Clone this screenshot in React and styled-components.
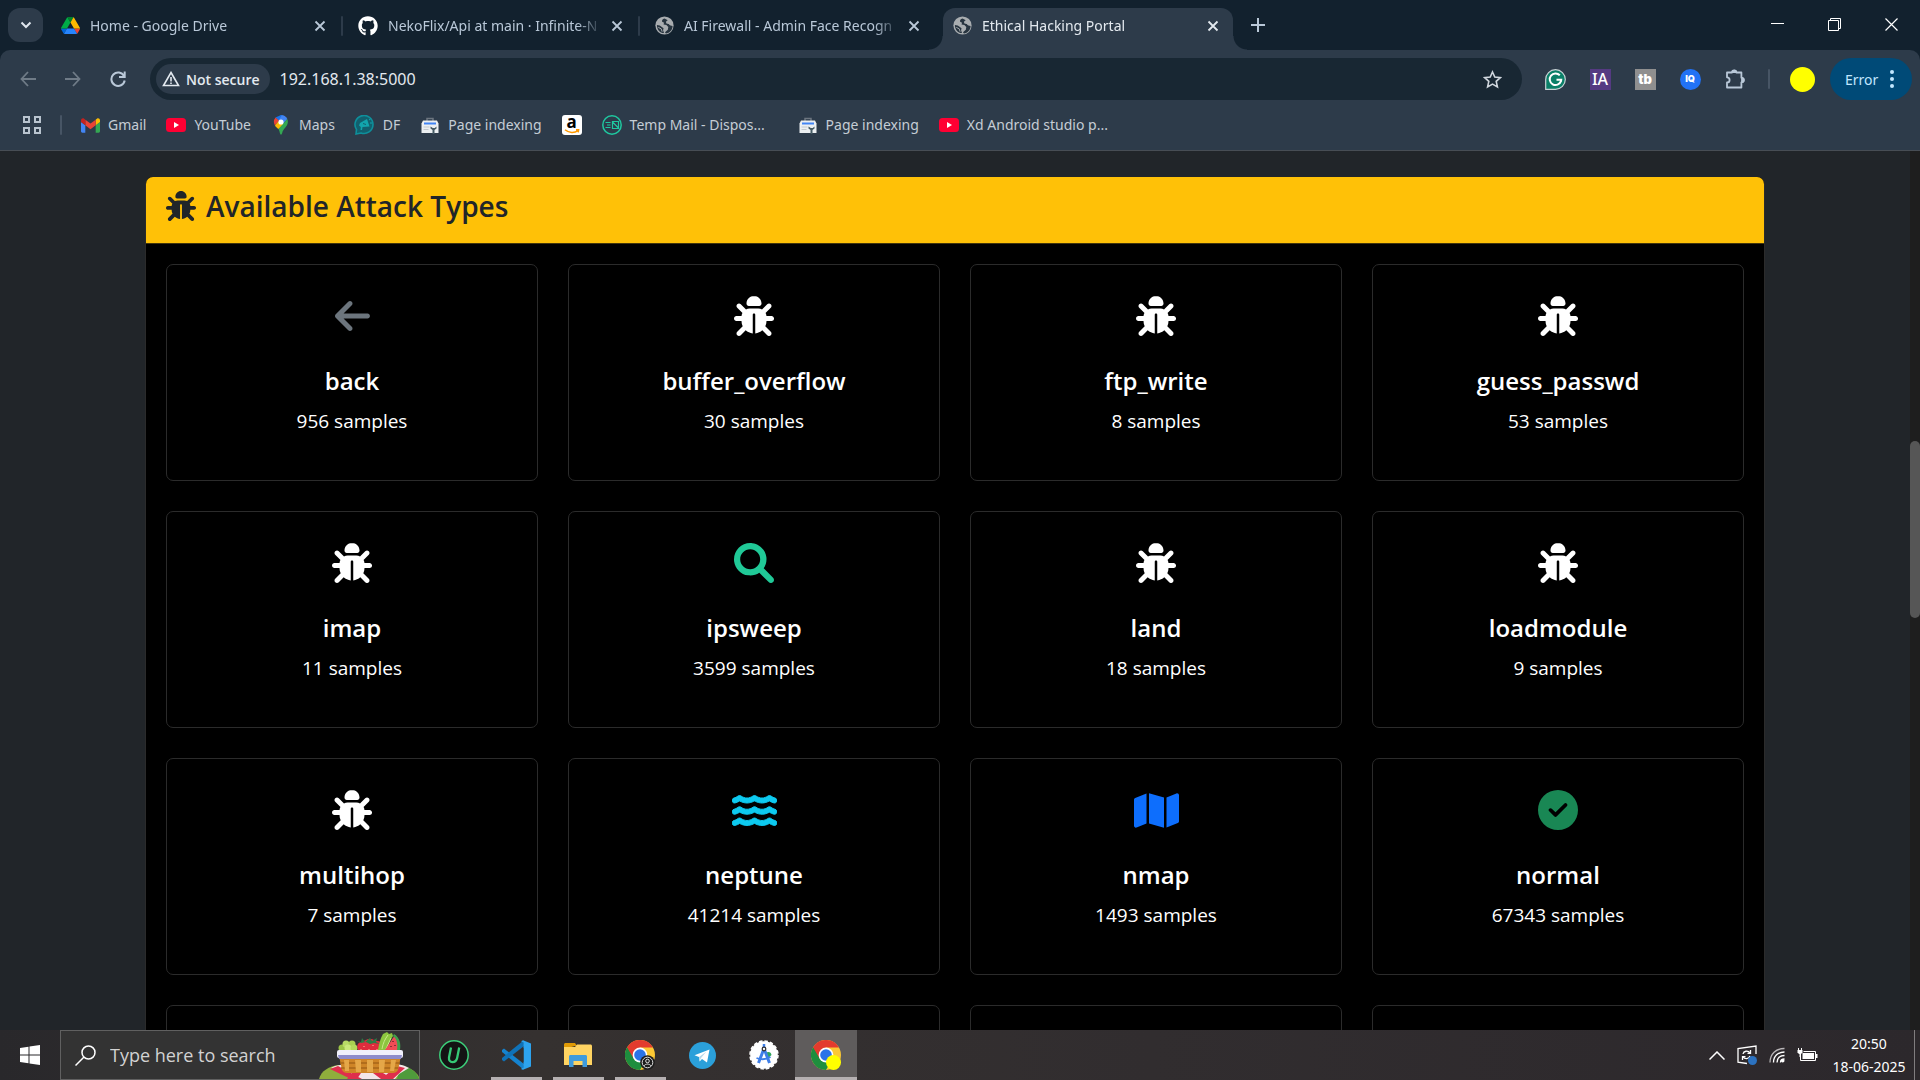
import React from "react";
import styled, { createGlobalStyle, css } from "styled-components";
import { FaBug, FaCircleCheck, FaGithub, FaMap, FaWater } from "react-icons/fa6";

const GlobalStyle = createGlobalStyle`
  *, *::before, *::after { box-sizing: border-box; }
  body {
    margin: 0;
    background: #212529;
    font-family: "Segoe UI", "Noto Sans", "Open Sans", sans-serif;
    font-size: 14px;
    color: #fff;
  }
  button, input { font: inherit; color: inherit; }
  button { border: 0; padding: 0; background: none; }
  h1, h2, p { margin: 0; }
  a { color: inherit; text-decoration: none; }
  svg { display: block; flex: none; }
`;

const Screen = styled.div`
  display: flex;
  flex-direction: column;
  height: 100vh;
  overflow: hidden;
`;

const center = css`
  display: flex;
  align-items: center;
  justify-content: center;
`;

/* ---------- tab strip ---------- */

const TabStrip = styled.header`
  flex: none;
  display: flex;
  height: 50px;
  padding: 8px 0 0 8px;
  background: #12212e;
`;

const TabSearchButton = styled.button`
  ${center}
  flex: none;
  width: 35px;
  height: 34px;
  margin-right: 3px;
  border-radius: 12px;
  background: #2d3b4a;
`;

const Tab = styled.div`
  position: relative;
  display: flex;
  align-items: center;
  width: ${(p) => (p.$active ? 290 : 297)}px;
  height: 42px;
  padding: 0 10px 7px ${(p) => (p.$active ? 10 : 15)}px;
  color: ${(p) => (p.$active ? "#e3e9ef" : "#b9c8d8")};
  ${(p) =>
    p.$active &&
    css`
      margin-left: 6px;
      border-radius: 12px 12px 0 0;
      background: #2d3b4a;
      &::before,
      &::after {
        content: "";
        position: absolute;
        bottom: 0;
        width: 14px;
        height: 14px;
      }
      &::before {
        right: 100%;
        background: radial-gradient(circle at 0 0, transparent 13px, #2d3b4a 14px);
      }
      &::after {
        left: 100%;
        background: radial-gradient(circle at 100% 0, transparent 13px, #2d3b4a 14px);
      }
    `}
`;

const TabTitle = styled.span`
  flex: 1;
  margin: 0 4px 0 10px;
  white-space: nowrap;
  line-height: 20px;
  mask-image: linear-gradient(to right, #000 88%, transparent);
`;

const TabClose = styled.button`
  ${center}
  width: 20px;
  height: 20px;
  margin-right: ${(p) => (p.$active ? 0 : 11)}px;
`;

const TabDivider = styled.span`
  width: 2px;
  height: 20px;
  margin-right: -10px;
  border-radius: 1px;
  background: #2d3b4a;
  visibility: ${(p) => (p.$hidden ? "hidden" : "visible")};
`;

const NewTab = styled.button`
  ${center}
  width: 34px;
  height: 34px;
  margin-left: 8px;
  color: #b9c8d8;
`;

const WindowButtons = styled.div`
  display: flex;
  margin: -8px 0 0 auto;
`;

const WindowButton = styled.button`
  ${center}
  width: 57px;
  height: 48px;
`;

/* ---------- toolbar ---------- */

const Chrome = styled.div`
  flex: none;
  background: #12212e;
`;

const ToolbarPanel = styled.div`
  border-radius: 10px 10px 0 0;
  border-bottom: 1px solid #474d54;
  background: #2d3b4a;
`;

const Toolbar = styled.div`
  display: flex;
  align-items: center;
  height: 58px;
  padding: 0 8px 0 5px;
`;

const NavButton = styled.button`
  ${center}
  width: 45px;
  height: 42px;
  color: ${(p) => (p.$off ? "#6f7b87" : "#b9c8d8")};
`;

const Omnibox = styled.div`
  flex: 1;
  display: flex;
  align-items: center;
  height: 42px;
  margin-left: 10px;
  padding: 0 20px 0 6px;
  border-radius: 21px;
  background: #182733;
`;

const SecurityChip = styled.button`
  display: flex;
  align-items: center;
  gap: 6px;
  height: 30px;
  padding: 0 10px 0 6px;
  border-radius: 15px;
  background: #2d3b4a;
  color: #e3e9ef;
  font-family: "Segoe UI", "Open Sans", sans-serif;
  font-weight: 600;
`;

const Address = styled.input`
  flex: 1;
  min-width: 0;
  height: 30px;
  margin-left: 10px;
  padding: 0;
  border: 0;
  outline: 0;
  background: none;
  font-size: 16px;
  color: #e3e9ef;
`;

const Extensions = styled.div`
  display: flex;
  gap: 23px;
  padding: 0 22px;
`;

const ExtensionButton = styled.button`
  ${center}
  width: 22px;
  height: 22px;
`;

const ToolbarDivider = styled.span`
  width: 2px;
  height: 20px;
  margin: ${(p) => (p.$tight ? "0 18px" : "0 20px 0 0")};
  border-radius: 1px;
  background: #475565;
`;

const Avatar = styled.button`
  width: 25px;
  height: 25px;
  margin-right: 15px;
  border-radius: 50%;
  background: #ffff00;
`;

const ErrorPill = styled.button`
  display: flex;
  align-items: center;
  justify-content: space-between;
  width: 82px;
  height: 42px;
  padding: 0 18px 0 15px;
  border-radius: 21px;
  background: #004a77;
  color: #c2e7ff;
`;

const BookmarkBar = styled.nav`
  display: flex;
  align-items: center;
  height: 42px;
  padding: 0 22px 8px;
  color: #c5cdd5;
`;

const Bookmark = styled.a`
  display: flex;
  align-items: center;
  gap: 8px;
  margin-right: 20px;
  line-height: 20px;
  white-space: nowrap;
`;

const BookmarkIcon = styled.span`
  ${center}
  width: 20px;
  height: 20px;
`;

const BookmarkLabel = styled.span`
  min-width: ${(p) => (p.$long ? 148 : 0)}px;
`;

/* ---------- page ---------- */

const Viewport = styled.div`
  flex: 1;
  min-height: 0;
  display: flex;
  background: #212529;
`;

const PageBody = styled.main`
  flex: 1;
  min-width: 0;
  overflow: hidden;
  padding: 26px 15px 0;
  font-family: "Segoe UI", "Open Sans", "Noto Sans", sans-serif;
`;

const Scrollbar = styled.div`
  width: 10px;
  padding-top: 290px;
  background: #1e1e1e;
`;

const ScrollThumb = styled.div`
  height: 177px;
  border-radius: 5px;
  background: #565656;
`;

const Panel = styled.section`
  max-width: 1620px;
  margin: 0 auto;
  border: 1px solid #2b2b2b;
  border-top: 0;
  border-radius: 7px;
  background: #000;
`;

const PanelHeader = styled.header`
  display: flex;
  align-items: flex-start;
  gap: 10px;
  height: 67px;
  padding: 14px 20px 0;
  border-bottom: 1px solid #42350b;
  border-radius: 7px 7px 0 0;
  background: #ffc107;
  color: #212529;
`;

const PanelTitle = styled.h1`
  font-size: 28px;
  line-height: 30px;
  font-weight: 600;
`;

const CardGrid = styled.div`
  display: grid;
  grid-template-columns: repeat(4, 1fr);
  gap: 30px;
  padding: 20px;
`;

const Card = styled.article`
  display: flex;
  flex-direction: column;
  align-items: center;
  height: 217px;
  padding-top: 31px;
  border: 1px solid #2b2b2b;
  border-radius: 7px;
`;

const CardIcon = styled.div`
  ${center}
  height: 40px;
  margin-bottom: 30px;
  font-size: ${(p) => (p.$wide ? 45 : 40)}px;
  color: ${(p) => p.$color};
`;

const CardTitle = styled.h2`
  margin-bottom: 10px;
  font-size: 24px;
  line-height: 30px;
  font-weight: 600;
`;

const CardText = styled.p`
  font-size: 19px;
  line-height: 30px;
`;

/* ---------- taskbar ---------- */

const Taskbar = styled.footer`
  flex: none;
  display: flex;
  height: 50px;
  background: linear-gradient(90deg, #29282b, #353130 28%, #312d2f 60%, #2c282c);
`;

const StartButton = styled.button`
  ${center}
  width: 60px;
`;

const SearchBox = styled.label`
  display: flex;
  align-items: center;
  width: 360px;
  margin-right: 3px;
  padding-left: 14px;
  border: 1px solid #606060;
  background: #333;
`;

const SearchInput = styled.input`
  flex: 1;
  min-width: 0;
  margin-left: 14px;
  padding: 0;
  border: 0;
  outline: 0;
  background: none;
  font-family: "Segoe UI", "Open Sans", sans-serif;
  font-size: 18px;
  &::placeholder {
    color: #d2d2d2;
    opacity: 1;
  }
`;

const TaskButton = styled.button`
  ${center}
  width: 62px;
  border: solid transparent;
  border-width: 3px 0;
  ${(p) =>
    p.$running &&
    css`
      background: linear-gradient(#b5b0b1, #b5b0b1) center bottom / 51px 3px no-repeat border-box;
    `}
  ${(p) =>
    p.$active &&
    css`
      background: #5f5c5c;
      border-bottom-color: #b5b0b1;
    `}
`;

const Tray = styled.div`
  display: flex;
  align-items: center;
  gap: 12px;
  margin-left: auto;
`;

const Clock = styled.time`
  display: flex;
  flex-direction: column;
  width: 78px;
  margin-right: 6px;
  text-align: center;
  line-height: 23px;
`;

const ShowDesktop = styled.button`
  align-self: stretch;
  width: 6px;
  margin-left: -12px;
  border-left: 1px solid #807d7f;
`;

/* ---------- drawings ---------- */

const Svg = ({ w = 20, h = w, box, children, ...rest }) => (
  <svg width={w} height={h} viewBox={box || `0 0 ${w} ${h}`} fill="none" aria-hidden="true" {...rest}>
    {children}
  </svg>
);

const ArrowLeftIcon = () => (
  <Svg w={35} h={40} box="0 0 448 512">
    <path
      fill="currentColor"
      d="M447.1 256C447.1 273.7 432.8 288 415.1 288H109.3l105.4 105.4c12.5 12.5 12.5 32.75 0 45.25C208.4 444.9 200.2 448 192 448s-16.38-3.125-22.62-9.375l-160-160c-12.5-12.5-12.5-32.75 0-45.25l160-160c12.5-12.5 32.75-12.5 45.25 0s12.5 32.75 0 45.25L109.3 224H416C433.7 224 447.1 238.3 447.1 256z"
    />
  </Svg>
);

const MagnifierIcon = () => (
  <Svg w={40} box="0 0 512 512">
    <path
      fill="currentColor"
      d="M500.3 443.7l-119.7-119.7c27.22-40.41 40.65-90.9 33.46-144.7C401.8 87.79 326.8 13.32 235.2 1.723C99.01-15.51-15.51 99.01 1.724 235.2c11.6 91.64 86.08 166.7 177.6 178.9c53.8 7.189 104.3-6.236 144.7-33.46l119.7 119.7c15.62 15.62 40.95 15.62 56.57 0C515.9 484.7 515.9 459.3 500.3 443.7zM79.1 208c0-70.58 57.42-128 128-128s128 57.42 128 128c0 70.58-57.42 128-128 128S79.1 278.6 79.1 208z"
    />
  </Svg>
);

const WavesIcon = () => <FaWater stroke="currentColor" strokeWidth="12" />;

const Cross = () => (
  <Svg w={12} stroke="currentColor" strokeWidth="1.8">
    <path d="M1.5 1.5l9 9M10.5 1.5l-9 9" />
  </Svg>
);

const DriveIcon = () => (
  <Svg w={19} h={17} box="0 0 87.3 78">
    <path d="M6.6 66.85l3.85 6.65c.8 1.4 1.95 2.5 3.3 3.3L27.5 53H0c0 1.55.4 3.1 1.2 4.5z" fill="#0066da" />
    <path d="M43.65 25L29.9 1.2c-1.35.8-2.5 1.9-3.3 3.3L1.2 48.5A9 9 0 0 0 0 53h27.5z" fill="#00ac47" />
    <path d="M73.55 76.8c1.35-.8 2.5-1.9 3.3-3.3l1.6-2.75 7.65-13.25c.8-1.4 1.2-2.95 1.2-4.5H59.8l5.85 11.5z" fill="#ea4335" />
    <path d="M43.65 25L57.4 1.2C56.05.4 54.5 0 52.9 0H34.4c-1.6 0-3.15.45-4.5 1.2z" fill="#00832d" />
    <path d="M59.8 53H27.5L13.75 76.8c1.35.8 2.9 1.2 4.5 1.2h50.8c1.6 0 3.15-.45 4.5-1.2z" fill="#2684fc" />
    <path d="M73.4 26.5L60.7 4.5c-.8-1.4-1.95-2.5-3.3-3.3L43.65 25 59.8 53h27.45c0-1.55-.4-3.1-1.2-4.5z" fill="#ffba00" />
  </Svg>
);

const GlobeIcon = () => (
  <Svg w={19} box="0 0 20 20">
    <circle cx="10" cy="10" r="9.6" fill="#a9adb0" />
    <path
      d="M10 2.500c-2 .5-3 2-2.500 3.500L9.500 7 9 9l3 .5 2 2-.5 3-3 2.500 1 1.500c4-.5 7-4 7-8-1.500 0-3-.5-4-2l-2.500-.5-.5-2 2-1.500z"
      fill="#27343f"
    />
    <path d="M12.500 5h3l2 4-2.500-.5-2.500-1.500z" fill="#a9adb0" />
    <path d="M2 9.500l3 .5 4 3-.5 2 1 3C5 18 2 14 2 9.500z" fill="#27343f" />
    <path d="M3.500 12l3 1.500 1 3" stroke="#a9adb0" />
  </Svg>
);

const GmailIcon = () => (
  <Svg w={19} h={15} box="52 42 88 66">
    <path fill="#4285f4" d="M58 108h14V74L52 59v43c0 3.320 2.690 6 6 6" />
    <path fill="#34a853" d="M120 108h14c3.320 0 6-2.690 6-6V59l-20 15" />
    <path fill="#fbbc04" d="M120 48v26l20-15v-8c0-7.420-8.470-11.650-14.400-7.200" />
    <path fill="#ea4335" d="M72 74V48l24 18 24-18v26L96 92" />
    <path fill="#c5221f" d="M52 51v8l20 15V48l-5.600-4.200c-5.940-4.450-14.400-.22-14.400 7.200" />
  </Svg>
);

const YouTubeIcon = () => (
  <Svg w={20} h={14}>
    <rect width="20" height="14" rx="3.500" fill="#ff0033" />
    <path d="M8 4v6l5-3z" fill="#fff" />
  </Svg>
);

const MapsIcon = () => (
  <Svg w={16} h={20} box="0 0 16 20">
    <path d="M8 0a7 7 0 0 1 6.300 4L9.500 9.500 5 5.200 8 0z" fill="#4285f4" />
    <path d="M8 0L2.500 2.500 5.500 5.500 9 .1z" fill="#1a73e8" />
    <path d="M2.500 2.500A7 7 0 0 0 2 10.500L6 5.600z" fill="#ea4335" />
    <path d="M2 10.500l3.200-4 5.300 3L5.500 14C4 12.800 2.500 11.800 2 10.500z" fill="#fbbc04" />
    <path d="M14.300 4c1 2.200.7 4.500-.5 6.500C12 13.500 9.500 15 9 18.500c-.2 1.500-1.800 1.500-2 0-.2-1.700-.8-3-1.500-4.500z" fill="#34a853" />
    <circle cx="8" cy="7" r="2.600" fill="#fff" />
  </Svg>
);

const DfIcon = () => (
  <Svg w={21} h={20} box="0 0 21 20">
    <path d="M2 19l.5-4.500A9 9 0 1 1 7 18z" fill="#12606e" stroke="#0e8f9b" strokeWidth="1.600" />
    <path d="M5 10.500L6 8l7-4 2.500 7.500-7 .5-.5 3H6.500l.3-3z" fill="#12a5ad" />
    <path d="M9 8.500l3 1" stroke="#12606e" />
    <path d="M15 5l1.500-1M16 8h2" stroke="#12a5ad" />
  </Svg>
);

const IndexingIcon = () => (
  <Svg w={18} h={17} box="0 0 18 17">
    <path d="M6 4V1.500h6V4" stroke="#6d7680" strokeWidth="1.500" />
    <path d="M2 3.500h14l1.500 3V16H.5V6.500z" fill="#eceff1" />
    <path d="M3 5.500h12v2H3z" fill="#4285f4" />
    <path d="M2.500 10h6M2.500 12.500h5" stroke="#c3c9ce" />
    <path d="M9.500 9.500v2l2 1.500v4h2v-4l2-1.500v-2l-1.700 1.500h-2z" fill="#455a64" />
  </Svg>
);

const AmazonBox = styled.span`
  display: flex;
  flex-direction: column;
  align-items: center;
  width: 20px;
  height: 20px;
  border-radius: 3px;
  background: #fff;
  color: #000;
  font-size: 17px;
  font-weight: 700;
  line-height: 14px;
`;

const AmazonIcon = () => (
  <AmazonBox>
    a
    <Svg w={16} h={5}>
      <path d="M1 .8c4 3.400 9.500 3.400 13 .8M12 .8h2.600l-.4 2.600" stroke="#ff9900" strokeWidth="1.500" />
    </Svg>
  </AmazonBox>
);

const TempMailIcon = () => (
  <Svg w={20}>
    <circle cx="10" cy="10" r="9.200" stroke="#1fc8a0" strokeWidth="1.500" />
    <path d="M3.500 7.500h5M5 10h3.500M3.500 12.500h5M10.500 6.500h6v7h-6zM10.500 7l6 6" stroke="#1fc8a0" strokeWidth="1.200" />
  </Svg>
);

const GrammarlyIcon = () => (
  <Svg w={21}>
    <path d="M10.500.7a9.800 9.800 0 1 1 0 19.600H.7v-9.800A9.800 9.800 0 0 1 10.500.7z" fill="#0b8068" stroke="#c9d3d6" strokeWidth="1.200" />
    <path d="M14.800 6.300A5.800 5.800 0 1 0 16 12.200l.2-1.400h-4.700" stroke="#fff" strokeWidth="2" />
  </Svg>
);

const LetterTile = styled.span`
  ${center}
  width: 21px;
  height: 21px;
  background: ${(p) => p.$bg};
  border-radius: ${(p) => (p.$round ? "50%" : 0)};
  color: #fff;
  font-family: ${(p) => (p.$heavy ? '"Inter", sans-serif' : "inherit")};
  font-size: ${(p) => p.$size || 16}px;
  font-weight: ${(p) => (p.$heavy ? 900 : 500)};
  line-height: 20px;
`;

const PuzzleIcon = () => (
  <Svg w={22} stroke="#b9c8d8" strokeWidth="1.800">
    <path d="M3 4.500h5a2.200 2.200 0 0 1 4.400 0h5v5.200a2.200 2.200 0 0 1 0 4.600v5.200H3v-5a2.600 2.600 0 0 0 0-5.200z" strokeLinejoin="round" />
    <path d="M8.500 4A1.800 1.800 0 0 1 12 4zM18 10.200a1.800 1.800 0 0 1 0 3.600z" fill="#b9c8d8" />
  </Svg>
);

const BasketCorner = styled.span`
  align-self: flex-end;
`;

const BasketArt = () => (
  <BasketCorner>
    <Svg w={100} h={47} box="0 0 100 47">
      <path d="M0 47c2-8 10-13 20-14h60c10 2 17 6 20 12v2z" fill="#8fae3c" />
      <path d="M82 33c9 2 16 7 18 14H78z" fill="#4f9b3c" />
      <path d="M12 36c5-3 12-4 20-4h42c8 0 12 2 16 4l-10 6-4 5H40z" fill="#f3e6e8" />
      <path d="M11 37l8-3 24 13H32zM28 47l10-12h8l-8 12zM54 35l20 12H62L46 35zM62 47l16-13 8 2-12 11z" fill="#df2f4c" />
      <circle cx="23" cy="16" r="3.500" fill="#9dc548" />
      <circle cx="27" cy="12" r="3.500" fill="#b9db66" />
      <circle cx="33" cy="12" r="3.500" fill="#a8cf50" />
      <circle cx="29" cy="16" r="3.500" fill="#cbe97c" />
      <circle cx="35" cy="16" r="3.500" fill="#b4d85a" />
      <path d="M40 19c-3-4-2-8 2-9s5-3 9-3 5 2 8 2 6 5 4 10z" fill="#e02c3d" />
      <path d="M38 9l4 1 1-4 3 4 5-4 2 3 5-3-1 4 4 2-6-1-4 1-4-2-5 1z" fill="#2f7a45" />
      <path d="M45 14v1M50 17v1M54 13v1M58 17v1M42 17v1" stroke="#ffc0a0" />
      <path d="M59 18c1-6 2-11 5-16l4-2 2 2 3-1 1 3-2 3-5 11z" fill="#8cc63f" />
      <path d="M63 17c1-6 3-10 6-14M67 17l5-11" stroke="#cbe88a" />
      <path d="M66 18L76 3c4 4 5 10 4 15z" fill="#f04c55" />
      <path d="M75 2c6 4 7 10 6 16h-3c1-6 0-11-4-14z" fill="#3f9f4d" />
      <path d="M74 9v1M76 13v1M72 14v1" stroke="#55202a" strokeWidth="1.300" />
      <path d="M20 24h62l-3 14c-1 2-3 3-5 3H28c-2 0-4-1-5-3z" fill="#cf8527" />
      <path d="M21 31h60M22 36h57" stroke="#a8651a" strokeWidth="1.500" />
      <path d="M25 28h5v11h-4zM36 28h6v12h-5zM48 28h6v12h-6zM60 28h6l-1 12h-5zM72 28h5l-2 11h-4z" fill="#e5a748" />
      <rect x="18" y="18" width="66" height="8" rx="2" fill="#f1f0fb" />
      <path d="M19 23h64l-1 4H20z" fill="#8f8ccb" />
    </Svg>
  </BasketCorner>
);

const IobitIcon = () => (
  <Svg w={30}>
    <circle cx="15" cy="15" r="14.200" fill="#141414" stroke="#3ccf7a" strokeWidth="1.500" />
    <path d="M12 7.500l-2 10c-.8 6 7 6 8.200.2l2-10.200" stroke="#35c976" strokeWidth="2.300" />
  </Svg>
);

const VsCodeIcon = () => (
  <Svg w={30}>
    <path d="M1 10l2-1.500 20 15.500-.5 5.500L1 12z" fill="#1583cf" />
    <path d="M1 20l2 1.500L23 6 22.500.500 1 18z" fill="#0f72b8" />
    <path d="M22 .300L30 3.500v23L22 29.700c-.8 0-1.500-.4-2-1l2.500-1.200v-25L20 1.300z" fill="#2da3ee" />
    <path d="M22.500 8v14L13 15z" fill="#32302f" />
  </Svg>
);

const FolderIcon = () => (
  <Svg w={28} h={24} box="0 0 28 24">
    <path d="M0 1.500C0 .7.700 0 1.500 0H11l2 3h-2L0 6z" fill="#e09a05" />
    <path d="M0 4h11l2-2.500h13.500c.8 0 1.500.7 1.500 1.500v19H0z" fill="#ffd462" />
    <path d="M5 24V13.500c0-1 .7-1.500 1.500-1.500h15c.8 0 1.500.5 1.500 1.500V24h-4.500v-6h-9v6z" fill="#3f9bdc" />
  </Svg>
);

const ChromeIcon = ({ badge }) => (
  <Svg w={30}>
    <circle cx="15" cy="15" r="15" fill="#fcc934" />
    <path d="M15 15L2 7.500A15 15 0 0 0 15 30l6.500-11.300z" fill="#1e8e3e" />
    <path d="M2 7.500A15 15 0 0 1 28 7.500H15L8.500 18.700z" fill="#e33b2e" />
    <path d="M2 7.500L8.500 18.700 6 22 1 12z" fill="#1e8e3e" />
    <circle cx="15" cy="15" r="7.400" fill="#fff" />
    <circle cx="15" cy="15" r="5.800" fill="#2a73e8" />
    {badge === "profile" ? (
      <g>
        <circle cx="22.500" cy="22.500" r="7.300" fill="#1c1c1c" />
        <circle cx="22.500" cy="22.500" r="5.300" stroke="#ddd" />
        <circle cx="22.500" cy="21" r="1.800" stroke="#ddd" />
        <path d="M19 26c1-2.500 6-2.500 7 0" stroke="#ddd" />
      </g>
    ) : (
      <circle cx="22.500" cy="22.500" r="7.500" fill="#ffff00" />
    )}
  </Svg>
);

const TelegramIcon = () => (
  <Svg w={27}>
    <circle cx="13.500" cy="13.500" r="13.500" fill="#2ba0da" />
    <path d="M5.500 13.200L20.500 7.500l-2.500 13-5-3.500-2.400 2.400-.6-4.400-4.500-1.800z" fill="#fff" />
    <path d="M10 15l7.500-5.500-5.500 6.500-1.400 3z" fill="#b7d9ea" />
  </Svg>
);

const AndroidStudioIcon = () => (
  <Svg w={30}>
    <circle cx="15" cy="15" r="13.800" fill="#fff" />
    <circle cx="15" cy="15" r="14" stroke="#fff" strokeWidth="1.500" strokeDasharray="3.500 2" />
    <path d="M16 13c4-2 6-1 6.500 2l-3 3z" fill="#2fa55b" />
    <path d="M15 8.500L9.500 23M15 8.500L20.500 23" stroke="#3f7fe8" strokeWidth="3" />
    <path d="M7.500 18c5 2 9 2 14-1" stroke="#3f7fe8" strokeWidth="1.800" />
    <path d="M15 4v4" stroke="#3f7fe8" strokeWidth="2.500" />
    <circle cx="15" cy="9" r="1.800" fill="#fff" stroke="#333" strokeWidth="1.300" />
  </Svg>
);

/* ---------- data ---------- */

const tabs = [
  { title: "Home - Google Drive", icon: <DriveIcon /> },
  { title: "NekoFlix/Api at main · Infinite-N", icon: <FaGithub size={20} color="#fff" /> },
  { title: "AI Firewall - Admin Face Recogn", icon: <GlobeIcon /> },
  { title: "Ethical Hacking Portal", icon: <GlobeIcon />, active: true },
];

const bookmarks = [
  { label: "Gmail", icon: <GmailIcon /> },
  { label: "YouTube", icon: <YouTubeIcon /> },
  { label: "Maps", icon: <MapsIcon /> },
  { label: "DF", icon: <DfIcon /> },
  { label: "Page indexing", icon: <IndexingIcon /> },
  { label: "", name: "Amazon", icon: <AmazonIcon /> },
  { label: "Temp Mail - Dispos...", icon: <TempMailIcon />, long: true },
  { label: "Page indexing", icon: <IndexingIcon /> },
  { label: "Xd Android studio p...", icon: <YouTubeIcon />, long: true },
];

const attacks = [
  { name: "back", samples: 956, icon: ArrowLeftIcon, color: "#6c757d" },
  { name: "buffer_overflow", samples: 30 },
  { name: "ftp_write", samples: 8 },
  { name: "guess_passwd", samples: 53 },
  { name: "imap", samples: 11 },
  { name: "ipsweep", samples: 3599, icon: MagnifierIcon, color: "#20c997" },
  { name: "land", samples: 18 },
  { name: "loadmodule", samples: 9 },
  { name: "multihop", samples: 7 },
  { name: "neptune", samples: 41214, icon: WavesIcon, color: "#0dcaf0", wide: true },
  { name: "nmap", samples: 1493, icon: FaMap, color: "#0d6efd", wide: true },
  { name: "normal", samples: 67343, icon: FaCircleCheck, color: "#198754" },
];

const apps = [
  { name: "IObit Uninstaller", icon: <IobitIcon /> },
  { name: "Visual Studio Code", icon: <VsCodeIcon />, running: true },
  { name: "File Explorer", icon: <FolderIcon />, running: true },
  { name: "Chrome, guest", icon: <ChromeIcon badge="profile" />, running: true },
  { name: "Telegram", icon: <TelegramIcon /> },
  { name: "Android Studio", icon: <AndroidStudioIcon /> },
  { name: "Chrome", icon: <ChromeIcon />, active: true },
];

/* ---------- sections ---------- */

const BrowserTabs = () => (
  <TabStrip>
    <TabSearchButton aria-label="Search tabs">
      <Svg w={12} h={8} stroke="#dfe6ee" strokeWidth="2">
        <path d="M1.500 1.500L6 6l4.500-4.500" />
      </Svg>
    </TabSearchButton>
    {tabs.map((t, i) => (
      <Tab key={t.title} $active={t.active}>
        {t.icon}
        <TabTitle>{t.title}</TabTitle>
        <TabClose $active={t.active} aria-label={`Close ${t.title}`}>
          <Cross />
        </TabClose>
        {!t.active && <TabDivider $hidden={i === 2} />}
      </Tab>
    ))}
    <NewTab aria-label="New tab">
      <Svg w={14} stroke="currentColor" strokeWidth="2">
        <path d="M7 0v14M0 7h14" />
      </Svg>
    </NewTab>
    <WindowButtons>
      <WindowButton aria-label="Minimize">
        <Svg w={13} stroke="#fff"><path d="M0 5.500h13" /></Svg>
      </WindowButton>
      <WindowButton aria-label="Restore">
        <Svg w={13} stroke="#fff">
          <path d="M.5 2.500h10v10H.5zM2.500 2V.5h10v10H11" />
        </Svg>
      </WindowButton>
      <WindowButton aria-label="Close window">
        <Svg w={13} stroke="#fff" strokeWidth="1.200"><path d="M.5.5l12 12M12.500.5l-12 12" /></Svg>
      </WindowButton>
    </WindowButtons>
  </TabStrip>
);

const BrowserToolbar = () => (
  <Toolbar>
    <NavButton $off aria-label="Back">
      <Svg w={16} stroke="currentColor" strokeWidth="1.800"><path d="M8 1L1.500 8 8 15M1.500 8H16" /></Svg>
    </NavButton>
    <NavButton $off aria-label="Forward">
      <Svg w={16} stroke="currentColor" strokeWidth="1.800"><path d="M8 1l6.500 7L8 15M14.500 8H0" /></Svg>
    </NavButton>
    <NavButton aria-label="Reload">
      <Svg w={16} stroke="currentColor" strokeWidth="2">
        <path d="M14 5A6.700 6.700 0 1 0 14.700 9.500M14.700.5V6H9" />
      </Svg>
    </NavButton>
    <Omnibox>
      <SecurityChip>
        <Svg w={18} h={16} stroke="currentColor" strokeWidth="1.600">
          <path d="M9 1.500L16.500 14.500h-15zM9 6v4.500M9 11.500v1.600" />
        </Svg>
        Not secure
      </SecurityChip>
      <Address aria-label="Address" defaultValue="192.168.1.38:5000" />
      <Svg w={19} stroke="#d0d7de" strokeWidth="1.600">
        <path d="M9.500 2l2.300 5.100 5.500.6-4.100 3.700 1.200 5.500-4.900-2.800-4.900 2.800 1.200-5.500L1.700 7.700l5.500-.6z" />
      </Svg>
    </Omnibox>
    <Extensions>
      <ExtensionButton aria-label="Grammarly"><GrammarlyIcon /></ExtensionButton>
      <ExtensionButton><LetterTile $bg="#553a82">IA</LetterTile></ExtensionButton>
      <ExtensionButton><LetterTile $bg="#8f8f8f" $heavy $size={13}>tb</LetterTile></ExtensionButton>
      <ExtensionButton>
        <LetterTile $bg="#2272f5" $round $heavy $size={9}>IQ</LetterTile>
      </ExtensionButton>
      <ExtensionButton aria-label="Extensions"><PuzzleIcon /></ExtensionButton>
    </Extensions>
    <ToolbarDivider />
    <Avatar aria-label="Profile" />
    <ErrorPill>
      Error
      <Svg w={4} h={18}>
        <circle cx="2" cy="2" r="2" fill="#c2e7ff" />
        <circle cx="2" cy="9" r="2" fill="#c2e7ff" />
        <circle cx="2" cy="16" r="2" fill="#c2e7ff" />
      </Svg>
    </ErrorPill>
  </Toolbar>
);

const Bookmarks = () => (
  <BookmarkBar>
    <Svg w={20} stroke="#b9c4cf" strokeWidth="2">
      <path d="M2 2h5v5H2zM13 2h5v5h-5zM2 13h5v5H2zM13 13h5v5h-5z" />
    </Svg>
    <ToolbarDivider $tight />
    {bookmarks.map((b, i) => (
      <Bookmark key={i} href="#" aria-label={b.name}>
        <BookmarkIcon>{b.icon}</BookmarkIcon>
        {b.label && <BookmarkLabel $long={b.long}>{b.label}</BookmarkLabel>}
      </Bookmark>
    ))}
  </BookmarkBar>
);

const AttackTypes = () => (
  <Panel>
    <PanelHeader>
      <FaBug size={30} />
      <PanelTitle>Available Attack Types</PanelTitle>
    </PanelHeader>
    <CardGrid>
      {attacks.map(({ name, samples, icon: Icon = FaBug, color = "#fff", wide }) => (
        <Card key={name}>
          <CardIcon $color={color} $wide={wide}>
            <Icon />
          </CardIcon>
          <CardTitle>{name}</CardTitle>
          <CardText>{samples} samples</CardText>
        </Card>
      ))}
      {[0, 1, 2, 3].map((n) => (
        <Card key={n} />
      ))}
    </CardGrid>
  </Panel>
);

const DesktopTaskbar = () => (
  <Taskbar>
    <StartButton aria-label="Start">
      <Svg w={20}>
        <path d="M0 3l8.500-1.300v7.800H0zM9.500 1.500L20 0v9.500H9.500zM0 10.500h8.500v7.800L0 17zM9.500 10.500H20V20L9.500 18.500z" fill="#fff" />
      </Svg>
    </StartButton>
    <SearchBox>
      <Svg w={21} stroke="#fff" strokeWidth="1.500">
        <circle cx="13.500" cy="7.500" r="6.500" />
        <path d="M9 12L.5 20.500" />
      </Svg>
      <SearchInput aria-label="Search" placeholder="Type here to search" />
      <BasketArt />
    </SearchBox>
    {apps.map((a) => (
      <TaskButton key={a.name} aria-label={a.name} $running={a.running} $active={a.active}>
        {a.icon}
      </TaskButton>
    ))}
    <Tray>
      <Svg w={16} h={9} stroke="#fff" strokeWidth="1.500"><path d="M.5 8.500L8 1l7.500 7.500" /></Svg>
      <Svg w={20} h={20} stroke="#fff" strokeWidth="1.300">
        <path d="M19 9V1L1 3.500v13.700l9 1.300" />
        <path d="M6 9c.5-3 5-4 7-1M13.500 5v3.300h-3M13 11c-1 3-5 3.500-7 .8M5.500 15v-3.300h3" />
        <circle cx="15.500" cy="15.500" r="4.500" fill="#2c72c0" stroke="none" />
      </Svg>
      <Svg w={16} h={16} stroke="#fff" strokeWidth="1.300">
        <path d="M1 15.500C1 7 7 1.500 15.500 1.500" stroke="#b9b6b8" />
        <path d="M4.500 15.500c0-6.500 4.500-10.500 11-10.500M8 15.500c0-4.500 3-7 7.500-7" />
        <path d="M11.500 15.500c0-2 1.500-3.500 4-3.500" />
        <circle cx="13.700" cy="13.700" r="1.800" fill="#fff" stroke="none" />
      </Svg>
      <Svg w={21} h={14}>
        <path d="M3.500 5v7.500h15v-9h-12" stroke="#fff" />
        <path d="M5.500 5h11.500v6H5.500z" fill="#fff" />
        <path d="M19 6h1.500v4H19z" fill="#fff" />
        <path d="M1.500 0v2M4.500 0v2M3 5v4" stroke="#fff" />
        <path d="M.5 2h5v2.500L4 6H2L.5 4.500z" fill="#fff" />
      </Svg>
      <Clock>
        <span>20:50</span>
        <span>18-06-2025</span>
      </Clock>
      <ShowDesktop aria-label="Show desktop" />
    </Tray>
  </Taskbar>
);

export default function App() {
  return (
    <Screen>
      <GlobalStyle />
      <BrowserTabs />
      <Chrome>
        <ToolbarPanel>
          <BrowserToolbar />
          <Bookmarks />
        </ToolbarPanel>
      </Chrome>
      <Viewport>
        <PageBody>
          <AttackTypes />
        </PageBody>
        <Scrollbar>
          <ScrollThumb />
        </Scrollbar>
      </Viewport>
      <DesktopTaskbar />
    </Screen>
  );
}
